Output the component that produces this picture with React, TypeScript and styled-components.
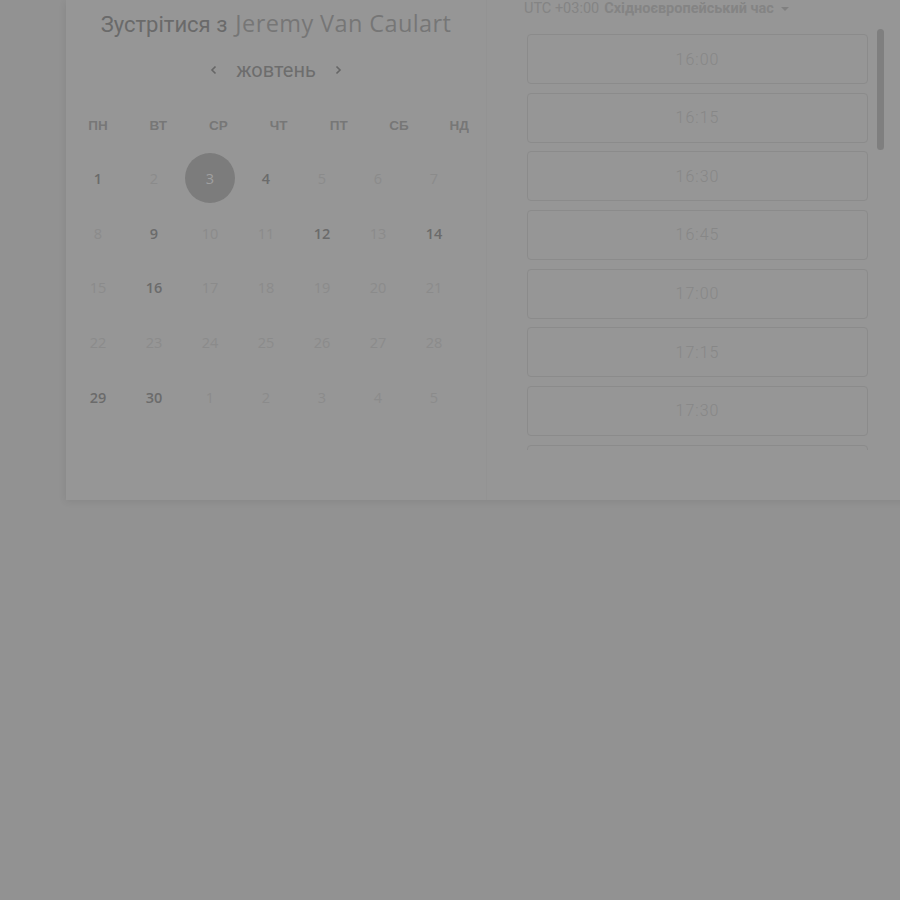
import React from 'react';
import styled, { createGlobalStyle } from 'styled-components';

const Global = createGlobalStyle`
  html, body { margin: 0; padding: 0; background: #929292; }
  body {
    width: 900px; height: 900px; overflow: hidden;
    font-family: Roboto, "Noto Sans", "Liberation Sans", sans-serif;
  }
`;

const Page = styled.div`
  padding-left: 66px;
`;

const Card = styled.div`
  display: flex;
  width: 900px;
  height: 500px;
  background: #969696;
  box-shadow: -1px 2px 7px rgba(0, 0, 0, 0.07);
`;

const LeftPanel = styled.div`
  box-sizing: border-box;
  width: 421px;
  flex: none;
  display: flex;
  flex-direction: column;
  align-items: center;
  border-right: 1px solid #939393;
`;

const Title = styled.h1`
  margin: 9px 0 0;
  font-size: 22px;
  line-height: 28px;
  font-weight: 400;
  color: #6a6a6a;
  text-align: center;
  white-space: nowrap;
`;

const Name = styled.span`
  font-family: "Open Sans", Lato, "Noto Sans", sans-serif;
  font-size: 23.5px;
  font-weight: 400;
  letter-spacing: 0.4px;
  color: #767676;
  margin-left: 8px;
`;

const MonthNav = styled.div`
  margin-top: 17px;
  height: 28px;
  display: flex;
  align-items: center;
  justify-content: center;
  gap: 17px;
`;

const Month = styled.span`
  font-size: 20px;
  line-height: 28px;
  color: #6d6d6d;
`;

const Chevron = styled.svg`
  width: 10px;
  height: 10px;
  color: #666;
`;

const WeekHeader = styled.div`
  align-self: flex-start;
  margin-top: 32px;
  padding-left: 2px;
  display: grid;
  grid-template-columns: repeat(7, 60.2px);
  height: 20px;
`;

const WeekDay = styled.div`
  font-size: 13.5px;
  font-weight: 700;
  line-height: 20px;
  text-align: center;
  color: #777;
  font-family: "Liberation Sans", Roboto, sans-serif;
`;

const DaysGrid = styled.div`
  align-self: flex-start;
  margin-top: 15px;
  padding-left: 4px;
  display: grid;
  grid-template-columns: repeat(7, 56px);
  grid-auto-rows: 54.75px;
`;

const DayCell = styled.div`
  display: flex;
  align-items: center;
  justify-content: center;
`;

const Day = styled.span<{ $state: 'on' | 'off' | 'sel' }>`
  display: flex;
  align-items: center;
  justify-content: center;
  font-family: "Open Sans", Lato, "Noto Sans", sans-serif;
  font-size: 14.5px;
  font-weight: ${p => (p.$state === 'on' ? 600 : 400)};
  color: ${p => (p.$state === 'on' ? '#6b6b6b' : p.$state === 'off' ? '#8b8b8b' : '#a0a0a0')};
  ${p =>
    p.$state === 'sel'
      ? `width: 50px; height: 50px; border-radius: 50%; background: #7c7c7c;`
      : ''}
`;

const RightPanel = styled.div`
  flex: 1;
  padding-left: 37px;
`;

const TzLabel = styled.div`
  margin-top: 1px;
  font-family: Roboto, "Liberation Sans", sans-serif;
  font-size: 14.5px;
  line-height: 16px;
  color: #848484;
  display: flex;
  align-items: center;
  white-space: nowrap;
`;

const TzBold = styled.b`
  font-weight: 700;
  margin-left: 5px;
`;

const Caret = styled.span`
  margin-left: 7px;
  width: 0;
  height: 0;
  border-left: 4px solid transparent;
  border-right: 4px solid transparent;
  border-top: 4px solid #808080;
`;

const SlotsWrap = styled.div`
  position: relative;
  margin-top: 11px;
  margin-left: 3px;
  padding-top: 6px;
  box-sizing: border-box;
  height: 422px;
  width: 360px;
  overflow: hidden;
`;

const SlotList = styled.div`
  display: flex;
  flex-direction: column;
  gap: 8.67px;
  width: 341px;
`;

const Slot = styled.div`
  box-sizing: border-box;
  height: 50px;
  flex: none;
  border: 1px solid #8b8b8b;
  border-radius: 4px;
  display: flex;
  align-items: center;
  justify-content: center;
  font-size: 16px;
  font-weight: 300;
  letter-spacing: 1px;
  color: #878787;
`;

const Thumb = styled.div`
  position: absolute;
  left: 350px;
  top: 1px;
  width: 7px;
  height: 121px;
  border-radius: 4px;
  background: #7f7f7f;
`;

const weekDays = ['ПН', 'ВТ', 'СР', 'ЧТ', 'ПТ', 'СБ', 'НД'];
const available = new Set([1, 4, 9, 12, 14, 16, 29, 30]);
const cells: { n: number; state: 'on' | 'off' | 'sel' }[] = [];
for (let i = 1; i <= 30; i++) {
  cells.push({ n: i, state: i === 3 ? 'sel' : available.has(i) ? 'on' : 'off' });
}
for (let i = 1; i <= 5; i++) cells.push({ n: i, state: 'off' });

const times = ['16:00', '16:15', '16:30', '16:45', '17:00', '17:15', '17:30', '17:45'];

export default function App() {
  return (
    <>
      <Global />
      <Page>
        <Card>
          <LeftPanel>
            <Title>
              Зустрітися з<Name>Jeremy Van Caulart</Name>
            </Title>
            <MonthNav>
              <Chevron viewBox="0 0 10 10">
                <path d="M6.5 1.5 L3 5 L6.5 8.5" fill="none" stroke="currentColor" strokeWidth="1.6" />
              </Chevron>
              <Month>жовтень</Month>
              <Chevron viewBox="0 0 10 10">
                <path d="M3.5 1.5 L7 5 L3.5 8.5" fill="none" stroke="currentColor" strokeWidth="1.6" />
              </Chevron>
            </MonthNav>
            <WeekHeader>
              {weekDays.map(d => (
                <WeekDay key={d}>{d}</WeekDay>
              ))}
            </WeekHeader>
            <DaysGrid>
              {cells.map((c, i) => (
                <DayCell key={i}>
                  <Day $state={c.state}>{c.n}</Day>
                </DayCell>
              ))}
            </DaysGrid>
          </LeftPanel>
          <RightPanel>
            <TzLabel>
              UTC +03:00<TzBold>Східноєвропейський час</TzBold>
              <Caret />
            </TzLabel>
            <SlotsWrap>
              <SlotList>
                {times.map(t => (
                  <Slot key={t}>{t}</Slot>
                ))}
              </SlotList>
              <Thumb />
            </SlotsWrap>
          </RightPanel>
        </Card>
      </Page>
    </>
  );
}
